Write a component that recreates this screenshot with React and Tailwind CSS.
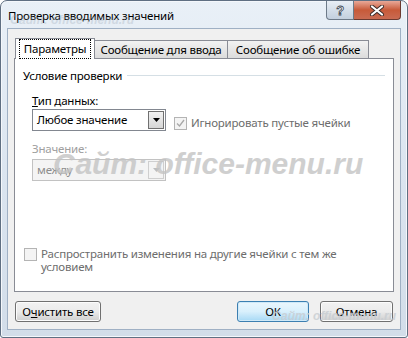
import React from 'react';

// Диалог "Проверка вводимых значений" в стиле Windows 7
const Checkbox = ({ checked, disabled }) => (
  <span className="w-[13px] h-[13px] border border-[#b4b4b4] bg-[#f4f4f4] flex items-center justify-center shrink-0">
    {checked && (
      <svg width="9" height="9" viewBox="0 0 9 9">
        <path d="M1 4.5 L3.5 7 L8 1" fill="none" stroke={disabled ? '#a8a8a8' : '#333'} strokeWidth="1.3" />
      </svg>
    )}
  </span>
);

const Arrow = ({ color }) => (
  <svg width="7" height="4" viewBox="0 0 7 4">
    <path d="M0 0 H7 L3.5 4 Z" fill={color} />
  </svg>
);

const Button = ({ children, isDefault, className = '' }) => (
  <div
    className={`h-[21px] rounded-[3px] border flex items-center justify-center text-black ${
      isDefault
        ? 'border-[#3c7fb1] bg-gradient-to-b from-[#eaf6fd] via-[#d9f0fc] to-[#a7d9f5] shadow-[inset_0_0_0_1px_#cfe9f8]'
        : 'border-[#707070] bg-gradient-to-b from-[#f2f2f2] via-[#ebebeb] to-[#cfcfcf] shadow-[inset_0_0_0_1px_#fcfcfc]'
    } ${className}`}
  >
    {children}
  </div>
);

export default function App() {
  return (
    <div className="w-[408px] h-[338px] relative overflow-hidden bg-white font-['Noto_Sans',sans-serif] text-[11.5px] tracking-[-0.2px] leading-none">
      <div className="w-full h-full flex flex-col rounded-t-[7px] rounded-b-[3px] border border-[#5f6f82] bg-gradient-to-b from-[#e9f0f7] via-[#dbe5f0] to-[#d2dde9] shadow-[inset_0_0_0_1px_#f4f7fb]">
        {/* заголовок */}
        <div className="h-[27px] flex items-start relative">
          <div className="pl-[7px] pt-[9px] text-black">Проверка вводимых значений</div>
          <div className="ml-auto mr-[6px] flex">
            <div className="w-[28px] h-[19px] rounded-bl-[4px] border border-t-0 border-[#6d7a88] bg-gradient-to-b from-[#e8eef5] via-[#d4dee9] to-[#c3d0de] flex items-center justify-center">
              <span className="font-['Liberation_Sans',sans-serif] font-bold text-[13px] text-white [-webkit-text-stroke:0.8px_#3b4652]">?</span>
            </div>
            <div className="w-[47px] h-[19px] rounded-br-[4px] border border-l-0 border-t-0 border-[#6b3a30] bg-gradient-to-b from-[#e8a898] via-[#c75a39] to-[#c96b52] flex items-center justify-center">
              <svg width="16" height="11" viewBox="0 0 16 11">
                <path d="M3 1.5 L13 9.5 M13 1.5 L3 9.5" stroke="#3a2a28" strokeWidth="4" strokeLinecap="round" />
                <path d="M3 1.5 L13 9.5 M13 1.5 L3 9.5" stroke="#ffffff" strokeWidth="2.2" strokeLinecap="round" />
              </svg>
            </div>
          </div>
        </div>

        {/* клиентская область */}
        <div className="flex-1 mx-[6px] mb-[7px] border border-[#9fb0c4] bg-[#f0f0f0] flex flex-col px-[6px] pt-[9px]">
          {/* вкладки */}
          <div className="flex items-end h-[20px] pl-[1px] relative z-10">
            <div className="h-[21px] w-[80px] -mb-[1px] border border-b-0 border-[#898c95] bg-white flex items-center justify-center">
              <span className="border border-dotted border-black px-[4px] py-[3px]">Параметры</span>
            </div>
            <div className="h-[18px] w-[133px] border border-l-0 border-b-0 border-[#898c95] bg-gradient-to-b from-[#f2f2f2] to-[#dcdcdc] flex items-center justify-center">
              Сообщение для ввода
            </div>
            <div className="h-[18px] w-[141px] border border-l-0 border-b-0 border-[#898c95] bg-gradient-to-b from-[#f2f2f2] to-[#dcdcdc] flex items-center justify-center">
              Сообщение об ошибке
            </div>
          </div>

          {/* панель */}
          <div className="h-[234px] border border-[#898c95] bg-white flex flex-col pl-[8px] pr-[8px]">
            <div className="flex items-center gap-[5px] mt-[11px]">
              <span className="text-black">Условие проверки</span>
              <div className="flex-1 h-px bg-[#d5dfe5]" />
            </div>

            <div className="flex mt-[13px]">
              <div className="flex flex-col pl-[9px] w-[151px]">
                <span className="text-black">
                  <span className="underline">Т</span>ип данных:
                </span>
                <div className="mt-[3px] w-[134px] h-[22px] border border-[#828790] bg-white flex items-center">
                  <span className="pl-[4px] flex-1">Любое значение</span>
                  <div className="w-[16px] h-[18px] mr-[1px] border border-[#707070] bg-gradient-to-b from-[#f2f2f2] to-[#d6d6d6] flex items-center justify-center">
                    <Arrow color="#000" />
                  </div>
                </div>
                <span className="mt-[12px] text-[#a0a0a0]">Значение:</span>
                <div className="mt-[4px] w-[134px] h-[22px] border border-[#c2c2c2] bg-[#f4f4f4] flex items-center">
                  <span className="pl-[4px] flex-1 text-[#8d8d8d]">между</span>
                  <div className="w-[16px] h-[18px] mr-[1px] border border-[#cfcfcf] bg-[#f4f4f4] flex items-center justify-center">
                    <Arrow color="#bdbdbd" />
                  </div>
                </div>
              </div>
              <div className="flex items-center gap-[4px] h-[13px] mt-[22px]">
                <Checkbox checked disabled />
                <span className="text-[#6d6d6d]">Игнорировать пустые ячейки</span>
              </div>
            </div>

            <div className="flex items-start gap-[4px] mt-auto mb-[18px] pl-[1px]">
              <Checkbox />
              <span className="text-[#6d6d6d] leading-[13px] -mt-[1px]">
                Распространить изменения на другие ячейки с тем же
                <br />
                условием
              </span>
            </div>
          </div>

          {/* кнопки */}
          <div className="flex mt-[9px] pl-[1px] pr-[1px]">
            <Button className="w-[86px]">
              <span>
                О<span className="underline">ч</span>истить все
              </span>
            </Button>
            <Button isDefault className="w-[72px] ml-auto">ОК</Button>
            <Button className="w-[73px] ml-[11px]">Отмена</Button>
          </div>
        </div>
      </div>

      {/* водяные знаки */}
      <div className="absolute left-[10px] top-[14px] text-[12px] tracking-normal italic font-bold text-[#9aa7b5] opacity-30 font-['Liberation_Sans',sans-serif]">
        Сайт: office-menu.ru
      </div>
      <div className="absolute left-[53px] top-[149px] text-[30px] tracking-normal italic font-bold leading-none text-[#c4c4c4] opacity-80 font-['Liberation_Sans',sans-serif]">
        Сайт: office-menu.ru
      </div>
      <div className="absolute left-[272px] top-[310px] text-[12px] tracking-normal italic font-bold leading-none text-[#c8cdd2] opacity-80 font-['Liberation_Sans',sans-serif]">
        Сайт: office-menu.ru
      </div>
    </div>
  );
}
